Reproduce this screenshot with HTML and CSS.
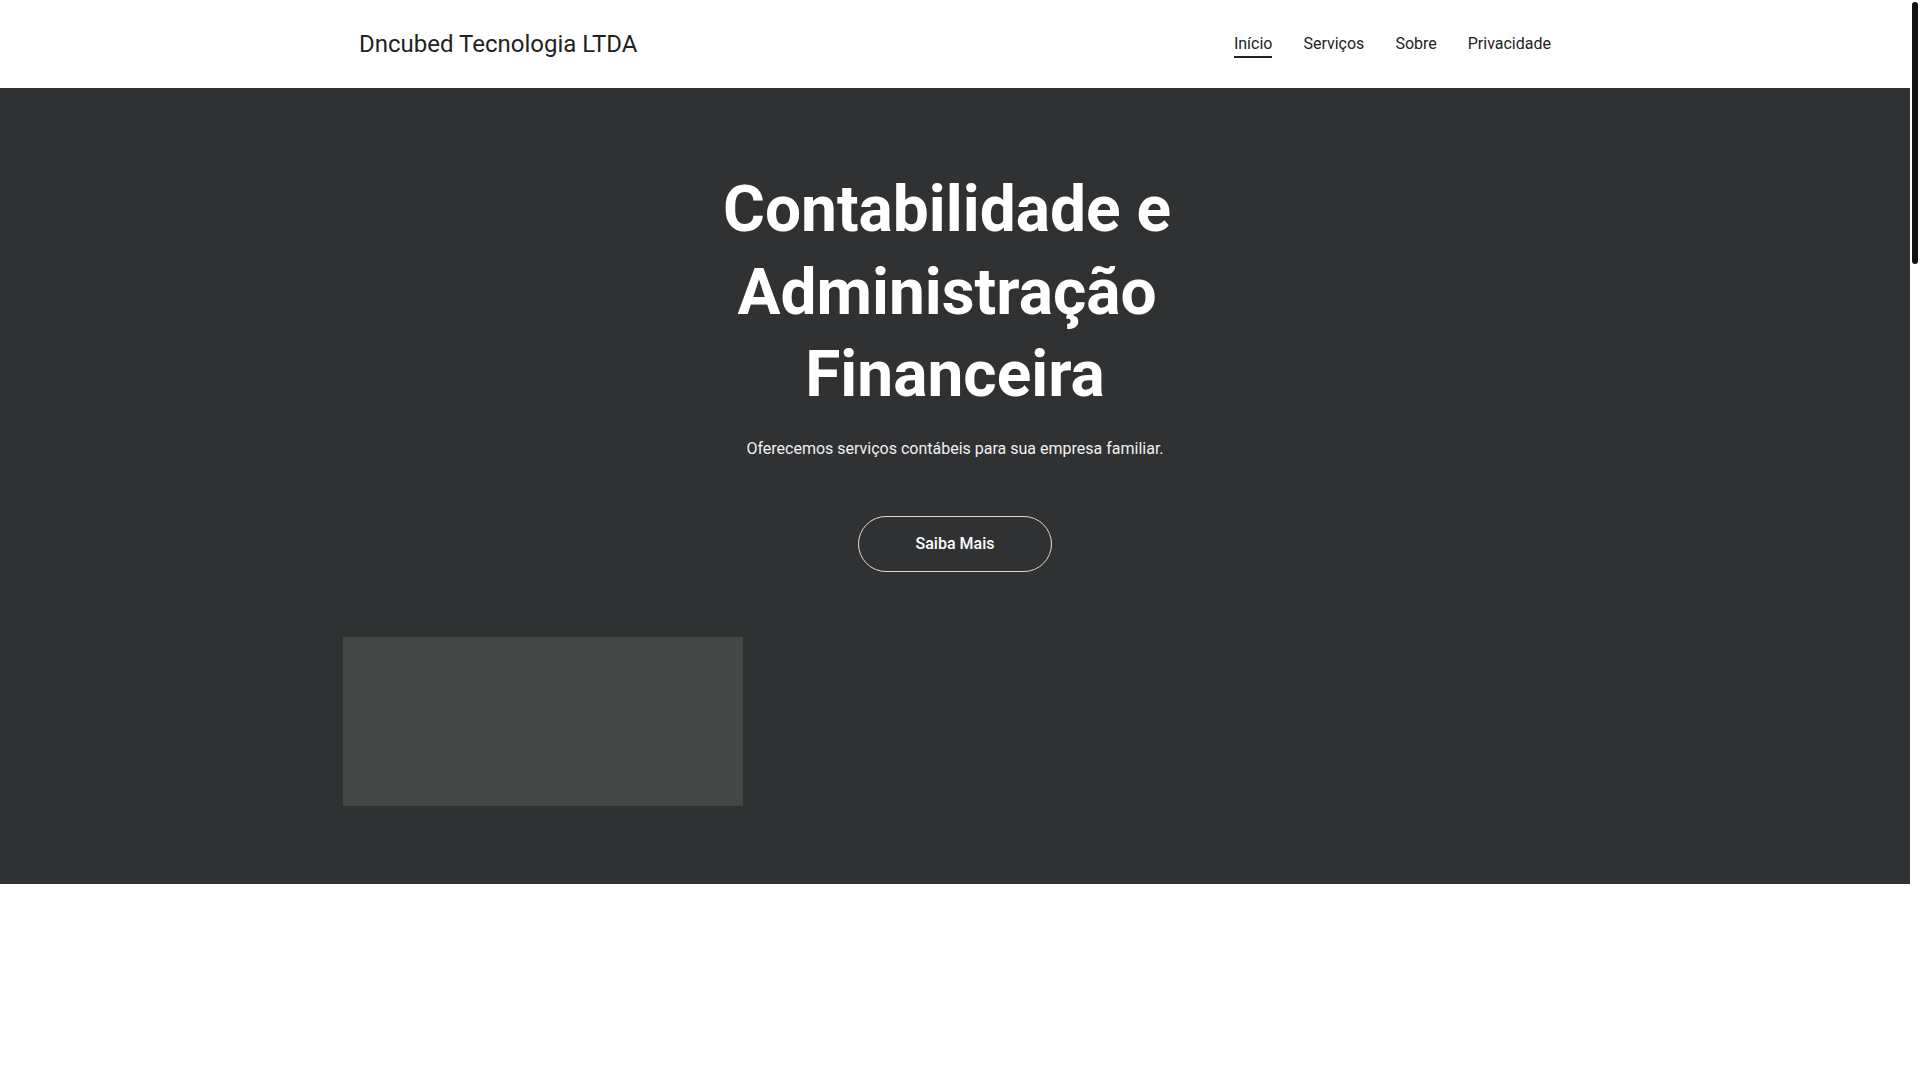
FILE: index.html
```html
<!DOCTYPE html>
<html lang="pt-BR">
<head>
<meta charset="utf-8">
<title>Dncubed Tecnologia LTDA</title>
<link rel="stylesheet" href="styles.css">
</head>
<body>
<div class="page">
  <header class="site-header">
    <div class="header-inner">
      <a class="brand" href="#">Dncubed Tecnologia LTDA</a>
      <nav class="main-nav">
        <a class="nav-link active" href="#">Início</a>
        <a class="nav-link" href="#">Serviços</a>
        <a class="nav-link" href="#">Sobre</a>
        <a class="nav-link" href="#">Privacidade</a>
      </nav>
    </div>
  </header>
  <section class="hero">
    <div class="hero-text">
      <h1 class="hero-title">Contabilidade e Administração Financeira</h1>
      <p class="hero-sub">Oferecemos serviços contábeis para sua empresa familiar.</p>
      <a class="hero-btn" href="#">Saiba Mais</a>
    </div>
    <div class="hero-media">
      <div class="media-box"></div>
    </div>
  </section>
  <section class="below"></section>
</div>
<div class="scroll-rail"><div class="scroll-thumb"></div></div>
</body>
</html>
```

FILE: styles.css
```css
html, body {
  margin: 0;
  padding: 0;
}
body {
  display: flex;
  min-height: 1080px;
  font-family: Roboto, "Liberation Sans", Arial, sans-serif;
  background: #ffffff;
  color: #222222;
}
.page {
  flex: 1;
  min-width: 0;
}
.scroll-rail {
  width: 10px;
  flex: none;
  padding-top: 2px;
  box-sizing: border-box;
  display: flex;
  justify-content: center;
  align-items: flex-start;
}
.scroll-thumb {
  width: 6px;
  height: 262px;
  border-radius: 3px;
  background: #111111;
}
a {
  text-decoration: none;
  color: inherit;
}
.site-header {
  height: 88px;
  background: #ffffff;
}
.header-inner {
  max-width: 1192px;
  height: 100%;
  margin: 0 auto;
  padding: 0 16px;
  display: flex;
  align-items: center;
  justify-content: space-between;
}
.brand {
  font-size: 24px;
  line-height: 32px;
  font-weight: 400;
  color: #222222;
}
.main-nav {
  display: flex;
  gap: 31px;
}
.nav-link {
  display: block;
  font-size: 16px;
  line-height: 20px;
  padding: 4px 0 2px;
  border-bottom: 2px solid transparent;
  color: #222222;
}
.nav-link.active {
  border-bottom-color: #222222;
}
.hero {
  background: #303133;
  padding: 81px 0 78px;
}
.hero-text {
  display: flex;
  flex-direction: column;
  align-items: center;
  text-align: center;
}
.hero-title {
  margin: 0 0 20px;
  max-width: 600px;
  font-size: 64px;
  line-height: 82.5px;
  font-weight: 700;
  color: #ffffff;
  white-space: break-spaces;
}
.hero-sub {
  margin: 0 0 55px;
  font-size: 16px;
  line-height: 24px;
  color: #f0f0f0;
}
.hero-btn {
  display: flex;
  align-items: center;
  justify-content: center;
  box-sizing: border-box;
  width: 194px;
  height: 56px;
  border: 1px solid #dcdcdc;
  border-radius: 28px;
  font-size: 16px;
  font-weight: 500;
  color: #ffffff;
}
.hero-media {
  max-width: 1224px;
  margin: 65px auto 0;
}
.media-box {
  width: 400px;
  height: 169px;
  background: #454746;
}
.below {
  height: 196px;
  background: #ffffff;
}
```
